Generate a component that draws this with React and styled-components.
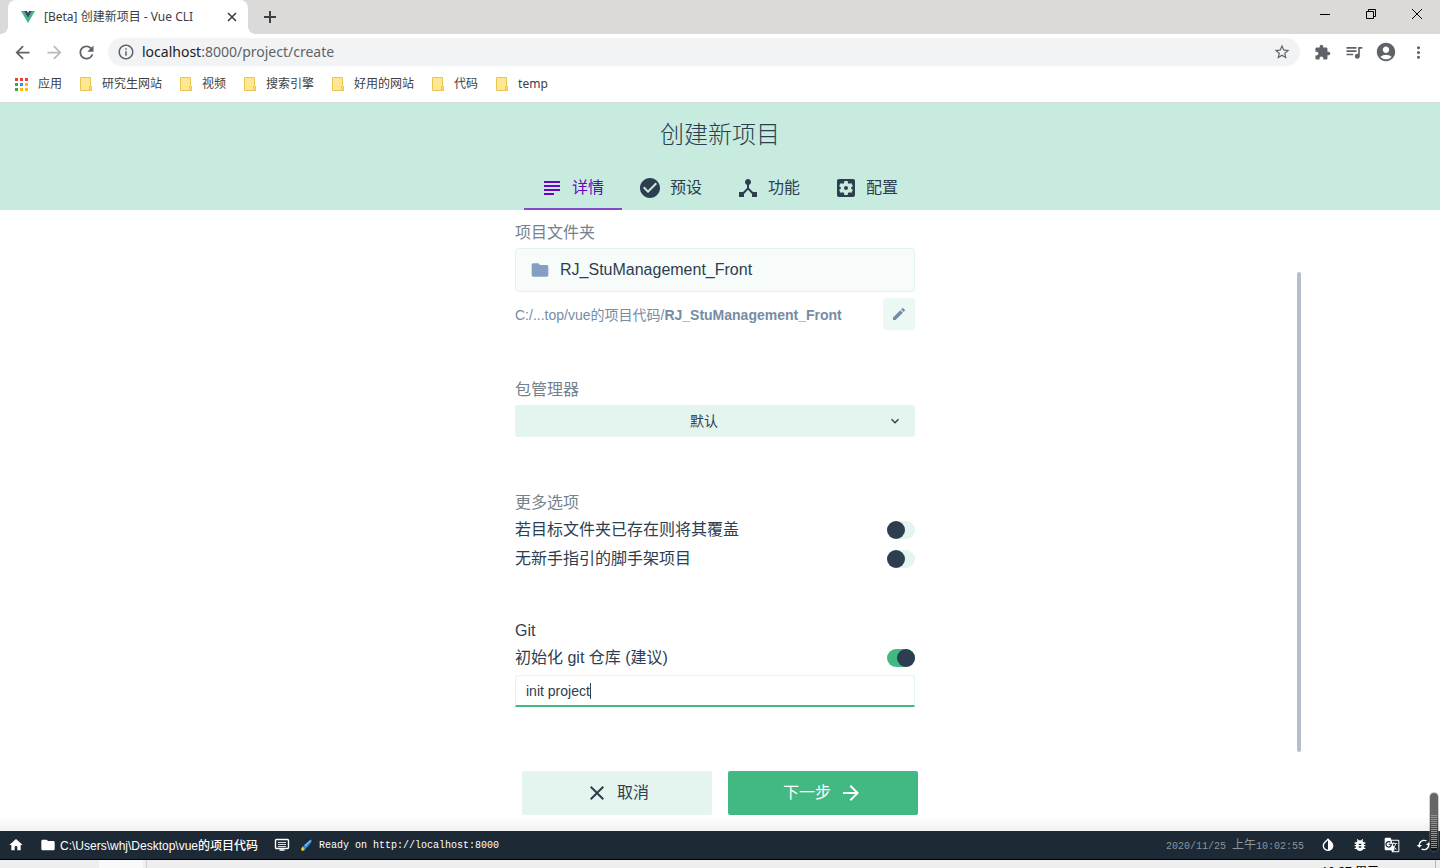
import React, { useState } from "react";
import styled, { createGlobalStyle } from "styled-components";
import {
  MdArrowBack, MdArrowForward, MdRefresh, MdInfoOutline, MdStarBorder, MdExtension,
  MdQueueMusic, MdAccountCircle, MdMoreVert, MdSubject, MdCheckCircle, MdDeviceHub,
  MdSettingsApplications, MdFolder, MdEdit, MdExpandMore, MdClose, MdHome,
  MdInvertColors, MdBugReport, MdGTranslate, MdCached,
} from "react-icons/md";

const sans = `"Liberation Sans", "Noto Sans CJK SC", sans-serif`;
const chromeFont = `"Noto Sans", "Noto Sans CJK SC", sans-serif`;
const mono = `"Liberation Mono", "Noto Sans CJK SC", monospace`;

const GlobalStyle = createGlobalStyle`
  *, *::before, *::after { box-sizing: border-box; }
  body { margin: 0; background: #fff; color: #2c3e50; font: 16px/24px ${sans}; }
  button { border: 0; padding: 0; background: none; color: inherit; font: inherit; cursor: pointer; }
  a { color: inherit; text-decoration: none; }
  svg { display: block; flex: none; }
`;

const Window = styled.div`
  display: flex;
  flex-direction: column;
  height: 100vh;
  overflow: hidden;
  position: relative;
`;

const TitleBar = styled.div`
  display: flex;
  flex: none;
  height: 34px;
  padding-left: 8px;
  background: #dbdad8;
  color: #3c4043;
`;

const BrowserTab = styled.div`
  display: flex;
  align-items: center;
  gap: 9px;
  width: 240px;
  padding: 0 10px 0 13px;
  border-radius: 8px 8px 0 0;
  background: #fff;
  font: 12px/36px ${chromeFont};
  position: relative;
  &::before, &::after {
    content: "";
    position: absolute;
    bottom: 0;
    width: 8px;
    height: 8px;
  }
  &::before { right: 100%; background: radial-gradient(circle at 0 0, transparent 8px, #fff 8px); }
  &::after { left: 100%; background: radial-gradient(circle at 100% 0, transparent 8px, #fff 8px); }
`;

const TabTitle = styled.span`
  flex: 1;
  white-space: nowrap;
`;

const IconButton = styled.button`
  display: grid;
  place-items: center;
  flex: none;
  width: ${(p) => p.$w || 32}px;
  color: ${(p) => p.$color || "#5f6368"};
`;

const WindowControls = styled.div`
  display: flex;
  margin-left: auto;
  height: 28px;
`;

const AddressRow = styled.div`
  display: flex;
  align-items: center;
  flex: none;
  height: 36px;
  padding: 0 6px;
`;

const Omnibox = styled.div`
  display: flex;
  align-items: center;
  flex: 1;
  gap: 7px;
  height: 28px;
  margin: 0 6px;
  padding: 0 9px;
  border-radius: 14px;
  background: #f1f3f4;
  color: #5f6368;
`;

const Url = styled.span`
  flex: 1;
  font: 14px/28px ${chromeFont};
  b { color: #202124; font-weight: 400; }
`;

const Bookmarks = styled.nav`
  display: flex;
  align-items: center;
  flex: none;
  gap: 18px;
  height: 32px;
  padding: 0 14px 4px 15px;
  color: #3c4043;
  font: 12px/28px ${chromeFont};
`;

const Bookmark = styled.a`
  display: flex;
  align-items: center;
  gap: 10px;
  white-space: nowrap;
`;

const Header = styled.header`
  display: flex;
  flex-direction: column;
  align-items: center;
  justify-content: space-between;
  flex: none;
  height: 108px;
  padding-top: 14px;
  border-top: 1px solid #d5dfdb;
  background: #c7ebdf;
`;

const Title = styled.h1`
  margin: 0;
  font-size: 24px;
  line-height: 36px;
  font-weight: 300;
`;

const Tabs = styled.nav`
  display: flex;
`;

const StepTab = styled.button`
  display: flex;
  align-items: center;
  gap: 8px;
  height: 44px;
  padding: 2px 18px 0 16px;
  border-bottom: 2px solid ${(p) => (p.$active ? "#8649c9" : "transparent")};
  color: ${(p) => (p.$active ? "#6806c1" : "#2c3e50")};
`;

const Main = styled.main`
  display: flex;
  flex: 1;
  flex-direction: column;
  min-height: 0;
`;

const ScrollArea = styled.div`
  display: grid;
  grid-template-columns: 1fr 10px;
  flex: 1;
  min-height: 0;
  margin: 0 139px;
`;

const Form = styled.form`
  justify-self: center;
  width: 400px;
  padding-top: 11px;
`;

const ScrollThumb = styled.div`
  justify-self: end;
  width: 4px;
  height: 480px;
  margin-top: 62px;
  border-radius: 2px;
  background: #b2c0cd;
`;

const Group = styled.section`
  margin-bottom: ${(p) => p.$gap}px;
`;

const Label = styled.label`
  display: block;
  line-height: 24px;
  margin-bottom: ${(p) => p.$gap || 0}px;
  color: ${(p) => (p.$strong ? "#2c3e50" : "#75818d")};
`;

const FolderField = styled.div`
  display: flex;
  align-items: center;
  gap: 10px;
  height: 44px;
  padding: 0 14px;
  border: 1px solid #e0f5ed;
  border-radius: 3px;
  background: #f7fcfa;
  color: #849fbf;
  input {
    flex: 1;
    min-width: 0;
    padding: 0;
    border: 0;
    outline: 0;
    background: none;
    color: #2c3e50;
    font: 16px/24px ${sans};
  }
`;

const PathRow = styled.div`
  display: flex;
  align-items: center;
  justify-content: space-between;
  height: 32px;
  margin-top: 6px;
  color: #748da5;
  font-size: 14px;
  line-height: 20px;
  span { padding-top: 2px; }
`;

const EditButton = styled.button`
  display: grid;
  place-items: center;
  width: 32px;
  height: 32px;
  border-radius: 3px;
  background: #ebf8f3;
`;

const SelectBox = styled.div`
  position: relative;
  select {
    display: block;
    width: 100%;
    height: 32px;
    padding: 0 34px 0 12px;
    border: 0;
    border-radius: 3px;
    appearance: none;
    background: #e4f4ee;
    color: #2c3e50;
    font: 14px/20px ${sans};
    text-align-last: center;
  }
  svg {
    position: absolute;
    top: 8px;
    right: 12px;
    pointer-events: none;
  }
`;

const SwitchRow = styled.label`
  display: flex;
  align-items: center;
  justify-content: space-between;
  height: 29px;
`;

const Switch = styled.input`
  appearance: none;
  display: flex;
  width: 28px;
  height: 18px;
  margin: 0;
  border-radius: 9px;
  background: #e4f4ee;
  &::before {
    content: "";
    width: 18px;
    height: 18px;
    border-radius: 50%;
    background: #2c3e50;
  }
  &:checked {
    justify-content: flex-end;
    background: #42b983;
  }
`;

const MessageBox = styled.div`
  position: relative;
  margin-top: 3px;
  input {
    display: block;
    width: 100%;
    height: 32px;
    padding: 0 10px;
    border: 1px solid #e4f4ee;
    border-bottom: 2px solid #42b983;
    border-radius: 3px 3px 0 0;
    outline: 0;
    color: #2c3e50;
    font: 14px/20px ${sans};
  }
`;

const Caret = styled.span`
  position: absolute;
  top: 8px;
  left: 75px;
  width: 1px;
  height: 16px;
  background: #2c3e50;
`;

const Actions = styled.div`
  display: flex;
  justify-content: center;
  flex: none;
  gap: 16px;
  padding: 16px;
  background: linear-gradient(#fff 80%, #f1f1f1);
`;

const ActionButton = styled.button`
  display: flex;
  align-items: center;
  justify-content: center;
  gap: 8px;
  width: 190px;
  height: 44px;
  border-radius: 2px;
  background: ${(p) => (p.$primary ? "#42b983" : "#e4f4ee")};
  color: ${(p) => (p.$primary ? "#fff" : "#2c3e50")};
`;

const StatusBar = styled.footer`
  display: flex;
  align-items: center;
  flex: none;
  height: 29px;
  padding-left: 8px;
  border-bottom: 1px solid #000;
  background: #1d2935;
  color: #fff;
`;

const FolderLink = styled.a`
  display: flex;
  align-items: center;
  gap: 4px;
  margin: 0 16px;
  font-size: 12px;
  font-weight: 500;
  white-space: nowrap;
  span { padding-top: 2px; }
`;

const LogLine = styled.span`
  display: flex;
  align-items: center;
  gap: 6px;
  margin-left: 10px;
  font: 10px/20px ${mono};
  white-space: nowrap;
  span { padding-top: 2px; }
`;

const Clock = styled.time`
  margin: 0 8px 0 auto;
  padding-top: 2px;
  color: #8e949a;
  font: 10px/20px ${mono};
  white-space: nowrap;
  span { font-size: 12px; }
`;

const StatusButton = styled(IconButton)`
  height: 28px;
  color: #fff;
`;

const Taskbar = styled.div`
  display: flex;
  flex: none;
  height: 8px;
  padding: 0 4px 0 99px;
  overflow: hidden;
  background: #eeeeee;
  color: #000;
  font: 12px/24px ${chromeFont};
`;

const TaskButton = styled.div`
  width: 48px;
  border-right: 1px solid #d0d0d0;
  background: linear-gradient(90deg, #f9f9f9 44px, #eee 44px);
`;

const TaskClock = styled.span`
  margin-left: auto;
  padding-right: 56px;
  border-right: 1px solid #b5b5b5;
`;

const Meter = styled.div`
  position: absolute;
  right: 2px;
  bottom: 17px;
  width: 8px;
  height: 58px;
  padding: 22px 1px 2px;
  border-radius: 4px;
  background: linear-gradient(#666 38%, #444 62%, #111);
  box-shadow: 0 0 0 1px #8886;
  &::before {
    content: "";
    display: block;
    height: 100%;
    background: repeating-linear-gradient(#45c46c 0 1px, transparent 1px 2px);
  }
`;

const VueLogo = () => (
  <svg width="14" height="12" viewBox="0 0 14 12">
    <path fill="#41b883" d="M0 0h3l4 7 4-7h3L7 12z" />
    <path fill="#35495e" d="M3 0h3l1 2 1-2h3L7 7z" />
  </svg>
);

const AppsIcon = () => {
  const colors = ["#ea4335", "#ea4335", "#ea4335", "#34a853", "#4285f4", "#fbbc04", "#34a853", "#fbbc04", "#fbbc04"];
  return (
    <svg width="13" height="13" viewBox="0 0 13 13">
      {colors.map((c, i) => (
        <rect key={i} x={(i % 3) * 5} y={Math.floor(i / 3) * 5} width="3" height="3" fill={c} />
      ))}
    </svg>
  );
};

const BookmarkIcon = () => (
  <svg width="12" height="14" viewBox="0 0 12 14">
    <path d="M.5.5h10v9h1v4H.5z" fill="#ffe694" stroke="#e8c650" />
    <path d="M9.500 13V9.500h2V13z" fill="#ffe694" stroke="#e8c650" />
  </svg>
);

const Line = ({ d, stroke = "#000", width = 1 }) => (
  <svg width="12" height="12" viewBox="0 0 12 12" fill="none" stroke={stroke} strokeWidth={width}>
    <path d={d} />
  </svg>
);

const LogIcon = () => (
  <svg width="16" height="14" viewBox="0 0 16 14" fill="none" stroke="#fff">
    <rect x="1.500" y="1.500" width="13" height="9" rx="1" strokeWidth="1.400" />
    <path d="M4 4.500h8M4 6.500h8M4 8.500h8" stroke="#d8dbde" />
    <path d="M5.500 12h5" strokeWidth="1.500" />
  </svg>
);

const PenIcon = () => (
  <svg width="13" height="14" viewBox="0 0 13 14">
    <path d="M12 .5L5 5.500 2 9l3 3 3-3 4-5z" fill="#2f86d0" stroke="#0c2038" strokeWidth=".8" />
    <path d="M10.500 2.500L5 8" stroke="#7cc0f0" strokeWidth="1.200" />
    <path d="M2.500 8.500L1 11l1 2 3-1z" fill="#f3d22c" />
  </svg>
);

const bookmarks = ["研究生网站", "视频", "搜索引擎", "好用的网站", "代码", "temp"];
const steps = [
  ["详情", MdSubject],
  ["预设", MdCheckCircle],
  ["功能", MdDeviceHub],
  ["配置", MdSettingsApplications],
];

export default function App() {
  const [step, setStep] = useState(0);
  const [folder, setFolder] = useState("RJ_StuManagement_Front");
  const [message, setMessage] = useState("init project");
  return (
    <Window>
      <GlobalStyle />
      <TitleBar>
        <BrowserTab>
          <VueLogo />
          <TabTitle>[Beta] 创建新项目 - Vue CLI</TabTitle>
          <IconButton $w={12} aria-label="Close tab"><Line d="M2 2l8 8M10 2L2 10" stroke="#3c4043" width={1.6} /></IconButton>
        </BrowserTab>
        <IconButton $w={44} aria-label="New tab"><Line d="M6 0v12M0 6h12" stroke="#3c4043" width={2} /></IconButton>
        <WindowControls>
          <IconButton $w={46} aria-label="Minimize"><Line d="M1 6.500h10" /></IconButton>
          <IconButton $w={46} aria-label="Restore"><Line d="M1.500 3.500h7v7h-7zM3.500 3.500v-2h7v7h-2" /></IconButton>
          <IconButton $w={46} aria-label="Close"><Line d="M1 1l10 10M11 1L1 11" /></IconButton>
        </WindowControls>
      </TitleBar>
      <AddressRow>
        <IconButton aria-label="Back"><MdArrowBack size={21} /></IconButton>
        <IconButton $color="#bababa" aria-label="Forward"><MdArrowForward size={21} /></IconButton>
        <IconButton aria-label="Reload"><MdRefresh size={21} /></IconButton>
        <Omnibox>
          <MdInfoOutline size={18} />
          <Url><b>localhost</b>:8000/project/create</Url>
          <MdStarBorder size={18} />
        </Omnibox>
        <IconButton aria-label="Extensions"><MdExtension size={17} /></IconButton>
        <IconButton aria-label="Media"><MdQueueMusic size={20} /></IconButton>
        <IconButton aria-label="Profile"><MdAccountCircle size={22} /></IconButton>
        <IconButton aria-label="Menu"><MdMoreVert size={19} /></IconButton>
      </AddressRow>
      <Bookmarks>
        <Bookmark href="#apps"><AppsIcon />应用</Bookmark>
        {bookmarks.map((b) => (
          <Bookmark key={b} href="#bookmark"><BookmarkIcon />{b}</Bookmark>
        ))}
      </Bookmarks>
      <Header>
        <Title>创建新项目</Title>
        <Tabs>
          {steps.map(([name, Icon], i) => (
            <StepTab key={name} $active={step === i} onClick={() => setStep(i)}>
              <Icon size={24} />
              {name}
            </StepTab>
          ))}
        </Tabs>
      </Header>
      <Main>
        <ScrollArea>
          <Form onSubmit={(e) => e.preventDefault()}>
            <Group $gap={48}>
              <Label htmlFor="folder" $gap={3}>项目文件夹</Label>
              <FolderField>
                <MdFolder size={20} />
                <input id="folder" value={folder} onChange={(e) => setFolder(e.target.value)} />
              </FolderField>
              <PathRow>
                <span>C:/...top/vue的项目代码/<b>{folder}</b></span>
                <EditButton type="button" aria-label="Edit path"><MdEdit size={16} /></EditButton>
              </PathRow>
            </Group>
            <Group $gap={54}>
              <Label htmlFor="manager" $gap={3}>包管理器</Label>
              <SelectBox>
                <select id="manager"><option>默认</option></select>
                <MdExpandMore size={16} />
              </SelectBox>
            </Group>
            <Group $gap={46}>
              <Label as="div">更多选项</Label>
              <SwitchRow>若目标文件夹已存在则将其覆盖<Switch type="checkbox" /></SwitchRow>
              <SwitchRow>无新手指引的脚手架项目<Switch type="checkbox" /></SwitchRow>
            </Group>
            <Group $gap={0}>
              <Label as="div" $strong>Git</Label>
              <SwitchRow>初始化 git 仓库 (建议)<Switch type="checkbox" defaultChecked /></SwitchRow>
              <MessageBox>
                <input aria-label="Commit message" value={message} onChange={(e) => setMessage(e.target.value)} />
                <Caret />
              </MessageBox>
            </Group>
          </Form>
          <ScrollThumb />
        </ScrollArea>
        <Actions>
          <ActionButton><MdClose size={24} />取消</ActionButton>
          <ActionButton $primary>下一步<MdArrowForward size={24} /></ActionButton>
        </Actions>
      </Main>
      <StatusBar>
        <StatusButton $w={16} aria-label="Home"><MdHome size={16} /></StatusButton>
        <FolderLink href="#folder"><MdFolder size={16} /><span>C:\Users\whj\Desktop\vue的项目代码</span></FolderLink>
        <StatusButton $w={16} aria-label="Log"><LogIcon /></StatusButton>
        <LogLine><PenIcon /><span>Ready on http://localhost:8000</span></LogLine>
        <Clock>2020/11/25 <span>上午</span>10:02:55</Clock>
        <StatusButton aria-label="Dark mode"><MdInvertColors size={16} /></StatusButton>
        <StatusButton aria-label="Report a bug"><MdBugReport size={16} /></StatusButton>
        <StatusButton aria-label="Translate"><MdGTranslate size={16} /></StatusButton>
        <StatusButton aria-label="Refresh"><MdCached size={16} /></StatusButton>
      </StatusBar>
      <Taskbar>
        <TaskButton />
        <TaskClock>10:27 周三</TaskClock>
      </Taskbar>
      <Meter />
    </Window>
  );
}
